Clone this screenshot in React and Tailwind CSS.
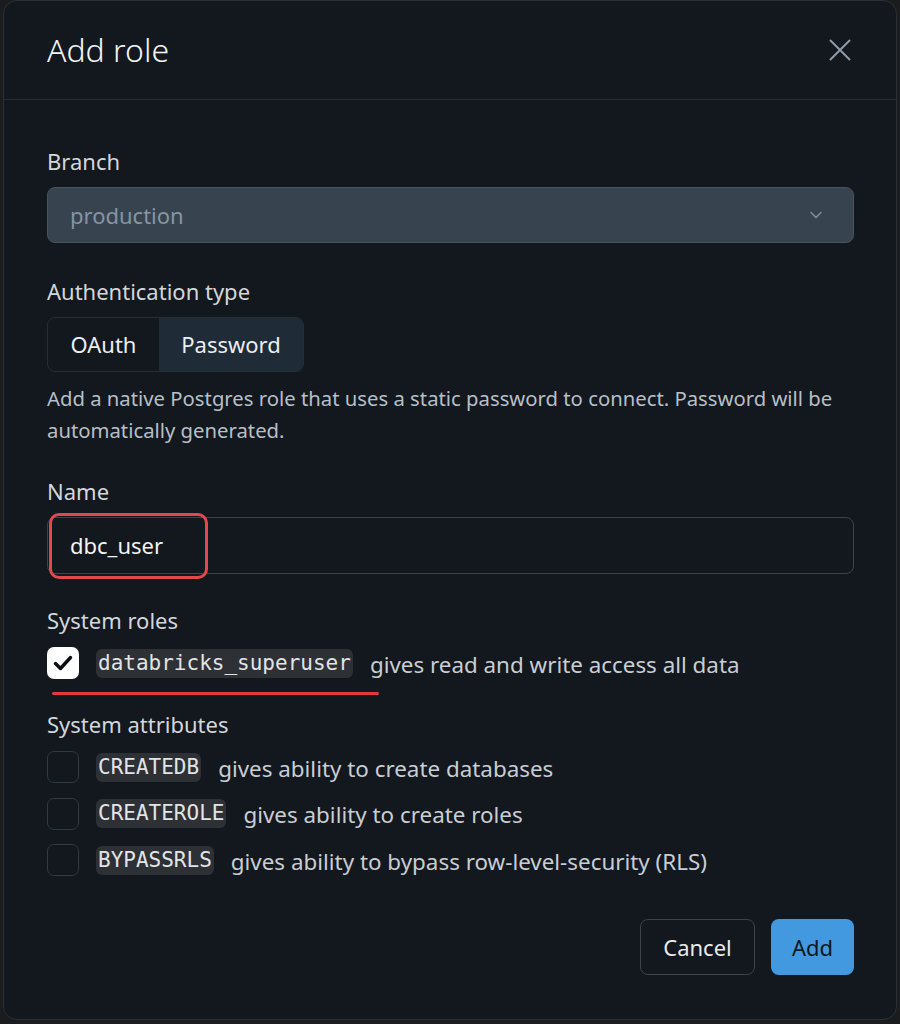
import React from 'react';

const sans = "font-['Noto_Sans','Open_Sans',sans-serif]";
const mono = "font-['DejaVu_Sans_Mono','Liberation_Mono',monospace]";

const Check = ({ checked }) => (
    <span
        className={
            checked
                ? 'w-[32px] h-[32px] shrink-0 rounded-[7px] bg-white flex items-center justify-center'
                : 'w-[32px] h-[32px] shrink-0 rounded-[7px] border-[1.5px] border-[#2e3a46]'
        }
    >
        {checked && (
            <svg width="22" height="22" viewBox="0 0 22 22" fill="none">
                <path d="M3.5 11.5 L8.5 16.5 L18.5 5.5" stroke="#0b0f14" strokeWidth="3.4" strokeLinecap="round" strokeLinejoin="round" />
            </svg>
        )}
    </span>
);

const Row = ({ checked, code, text }) => (
    <div className="flex items-center h-[32px]">
        <Check checked={checked} />
        <span className={`${mono} ml-[17px] text-[21px] leading-[29px] h-[29px] px-[2px] rounded-[6px] bg-[#2d3034] text-[#e2e4e6]`}>{code}</span>
        <span className="ml-[17px] text-[22.4px] text-[#c9ced3] leading-[28px] pt-[3px]">{text}</span>
    </div>
);

const Label = ({ children, className = '' }) => (
    <div className={`text-[22px] leading-[28px] text-[#d3d7db] ${className}`}>{children}</div>
);

export default function App() {
    return (
        <div className={`min-h-screen bg-[#1b1c1d] px-[3px] pb-[4px] ${sans}`}>
            <div className="rounded-[14px] border border-[#28303a] bg-[#13171e] h-[1020px] flex flex-col">

                {/* Header */}
                <header className="h-[99px] shrink-0 border-b border-[#262d36] pl-[43px] pr-[44px] flex items-center justify-between">
                    <h2 className="text-[32px] font-light text-[#f2f3f4] leading-[40px]">Add role</h2>
                    <svg width="24" height="24" viewBox="0 0 24 24" fill="none">
                        <path d="M2.5 2.5 L21.5 21.5 M21.5 2.5 L2.5 21.5" stroke="#8e9ba8" strokeWidth="2" strokeLinecap="round" />
                    </svg>
                </header>

                {/* Body */}
                <div className="pl-[43px] pr-[42px] pt-[47px] flex-1 flex flex-col">
                    <Label>Branch</Label>
                    <div className="mt-[12px] h-[56px] rounded-[8px] bg-[#37434f] border border-[#465360] flex items-center justify-between pl-[22px] pr-[30px]">
                        <span className="text-[22px] text-[#8595a3]">production</span>
                        <svg width="14" height="10" viewBox="0 0 14 10" fill="none">
                            <path d="M2 2.5 L7 7.5 L12 2.5" stroke="#7f8d9a" strokeWidth="1.6" strokeLinecap="round" strokeLinejoin="round" />
                        </svg>
                    </div>

                    <Label className="mt-[34px]">Authentication type</Label>
                    <div className="mt-[12px] h-[55px] w-[257px] rounded-[8px] border border-[#252d36] flex overflow-hidden">
                        <div className="w-[111px] flex items-center justify-center text-[22px] text-[#eceef0]">OAuth</div>
                        <div className="flex-1 flex items-center justify-center text-[22px] text-[#eceef0] bg-[#1f2b37]">Password</div>
                    </div>
                    <p className="mt-[10px] text-[20.3px] leading-[32px] text-[#b7bfc7]">
                        Add a native Postgres role that uses a static password to connect. Password will be automatically generated.
                    </p>

                    <Label className="mt-[31px]">Name</Label>
                    <div className="relative mt-[12px]">
                        <div className="h-[57px] rounded-[8px] border border-[#3a4450] flex items-center pl-[22px] text-[22px] text-[#f2f3f4]">
                            dbc_user
                        </div>
                        <div className="absolute left-[2px] top-[-4px] w-[159px] h-[66px] rounded-[10px] border-[3px] border-[#e04a4a]" />
                    </div>

                    <Label className="mt-[32px]">System roles</Label>
                    <div className="relative mt-[13px]">
                        <Row checked code="databricks_superuser" text="gives read and write access all data" />
                        <div className="absolute left-[5px] top-[45px] w-[327px] h-[3px] rounded-full bg-[#e03a3e]" />
                    </div>

                    <Label className="mt-[31px]">System attributes</Label>
                    <div className="mt-[13px] flex flex-col gap-[14.5px]">
                        <Row code="CREATEDB" text="gives ability to create databases" />
                        <Row code="CREATEROLE" text="gives ability to create roles" />
                        <Row code="BYPASSRLS" text="gives ability to bypass row-level-security (RLS)" />
                    </div>

                    <div className="mt-[43px] flex justify-end gap-[16px]">
                        <button className="h-[56px] w-[115px] rounded-[8px] border border-[#3a444f] text-[22px] text-[#e8eaec]">Cancel</button>
                        <button className="h-[56px] w-[83px] rounded-[8px] bg-[#4399e0] text-[22px] text-[#0e1822]">Add</button>
                    </div>
                </div>
            </div>
        </div>
    );
}
